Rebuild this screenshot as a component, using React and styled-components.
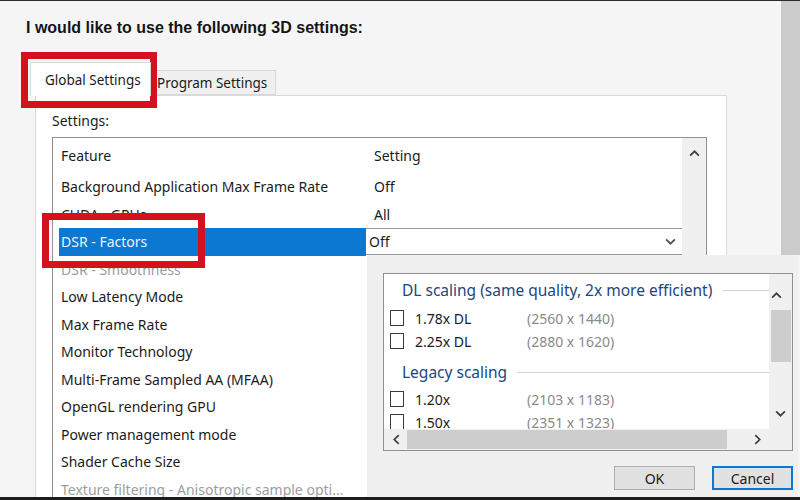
import React from 'react';
import styled, { createGlobalStyle } from 'styled-components';

const GlobalStyle = createGlobalStyle`
  html, body {
    margin: 0;
    padding: 0;
    background: #f4f4f5;
    overflow: hidden;
  }
  * { box-sizing: border-box; }
`;

const UI_FONT = `"Noto Sans", "Open Sans", sans-serif`;

const Window = styled.div`
  position: relative;
  width: 800px;
  height: 500px;
  overflow: hidden;
  background: #f5f5f6;
  border-top: 1px solid #2b2b2b;
  border-bottom: 3px solid #1c1c1c;
  font-family: ${UI_FONT};
  color: #1b1b1b;
  display: flex;
`;

const Main = styled.div`
  flex: 1;
  display: flex;
  flex-direction: column;
`;

const SideStrip = styled.div`
  width: 19px;
  height: 254px;
  background: #cbcbcb;
`;

const Title = styled.h1`
  margin: 17px 0 0 26px;
  font-family: "Liberation Sans", Arial, sans-serif;
  font-weight: bold;
  font-size: 16px;
  line-height: 20px;
  color: #151515;
`;

const TabStrip = styled.div`
  display: flex;
  align-items: flex-end;
  margin: 24px 0 0 30px;
  height: 34px;
`;

const Tab = styled.div`
  height: ${p => (p.$active ? '34px' : '25px')};
  width: ${p => (p.$active ? '121px' : '125px')};
  margin-bottom: ${p => (p.$active ? '-1px' : '0')};
  background: ${p => (p.$active ? '#ffffff' : '#f0f0f0')};
  border: 1px solid #d9d9d9;
  border-bottom: ${p => (p.$active ? 'none' : '1px solid #d9d9d9')};
  border-left: ${p => (p.$active ? '1px solid #d9d9d9' : 'none')};
  font-size: 13.5px;
  display: flex;
  align-items: center;
  padding-left: ${p => (p.$active ? '14px' : '6px')};
  padding-top: ${p => (p.$active ? '1px' : '0')};
  position: relative;
  z-index: ${p => (p.$active ? 1 : 0)};
`;

const Panel = styled.div`
  margin-left: 35px;
  width: 692px;
  flex: 1;
  background: #ffffff;
  border: 1px solid #d9d9d9;
  border-bottom: none;
  padding: 14px 0 0 16px;
  display: flex;
  flex-direction: column;
`;

const Label = styled.div`
  font-size: 14px;
  line-height: 21px;
  height: 27px;
`;

const ListBox = styled.div`
  flex: 1;
  width: 655px;
  border: 1px solid #8e9196;
  border-bottom: none;
  display: flex;
`;

const Table = styled.div`
  flex: 1;
  padding-left: 6px;
`;

const Row = styled.div`
  display: grid;
  grid-template-columns: 307px 1fr;
  height: ${p => (p.$header ? '35px' : '27.5px')};
  font-size: 14px;
`;

const FeatureCell = styled.div`
  display: flex;
  align-items: center;
  padding-left: 2px;
  white-space: nowrap;
  color: ${p => (p.$selected ? '#eaf3ff' : p.$dim ? '#9d9d9d' : '#1b1b1b')};
  background: ${p => (p.$selected ? '#0c78d2' : 'transparent')};
`;

const SettingCell = styled.div`
  display: flex;
  align-items: center;
  padding-left: 8px;
`;

const ComboBox = styled.div`
  display: flex;
  align-items: center;
  justify-content: space-between;
  padding: 0 6px 0 3px;
  border-top: 1px solid #9a9a9a;
  border-bottom: 1px solid #9a9a9a;
  background: #ffffff;
  height: 27px;
`;

const VScroll = styled.div`
  width: 24px;
  background: #f0f0f0;
  display: flex;
  flex-direction: column;
  align-items: center;
  padding-top: 10px;
`;

const Chevron = ({ dir = 'down', size = 10, color = '#505050' }) => {
  const paths = {
    up: 'M1 7 L5 3 L9 7',
    down: 'M1 3 L5 7 L9 3',
    left: 'M7 1 L3 5 L7 9',
    right: 'M3 1 L7 5 L3 9',
  };
  return (
    <svg width={size} height={size} viewBox="0 0 10 10">
      <path d={paths[dir]} fill="none" stroke={color} strokeWidth="1.6" />
    </svg>
  );
};

/* ---- popup ---- */

const Popup = styled.div`
  position: absolute;
  left: 367px;
  top: 254px;
  width: 431px;
  height: 243px;
  background: #f0f0f0;
  padding: 18px 0 0 16px;
  display: flex;
  flex-direction: column;
`;

const FactorBox = styled.div`
  width: 410px;
  height: 178px;
  background: #ffffff;
  border: 1px solid #8e9196;
  display: grid;
  grid-template-columns: 1fr 23px;
  grid-template-rows: 1fr 21px;
`;

const FactorList = styled.div`
  overflow: hidden;
  padding: 0 0 0 6px;
  font-size: 14px;
`;

const GroupHeading = styled.div`
  display: flex;
  align-items: center;
  height: 20px;
  margin: ${p => (p.$first ? '6px 0 6.5px' : '9.5px 0 5.5px')};
  padding-left: 12px;
  color: #21467e;
  font-size: 15.5px;
  white-space: nowrap;

  &::after {
    content: '';
    flex: 1;
    height: 1px;
    background: #d4d4d4;
    margin-left: 10px;
  }
`;

const FactorRow = styled.div`
  display: flex;
  align-items: center;
  height: 23px;
  white-space: nowrap;
`;

const Check = styled.span`
  width: 14px;
  height: 16px;
  border: 1px solid #3a3a3a;
  background: #fff;
  margin-right: 11px;
  flex: none;
`;

const FactorName = styled.span`
  width: 112px;
  color: #1b1b1b;
`;

const FactorRes = styled.span`
  color: #8a8a8a;
`;

const PopScrollV = styled.div`
  background: #f0f0f0;
  display: flex;
  flex-direction: column;
  align-items: center;
  padding-top: 10px;
`;

const ThumbV = styled.div`
  width: 20px;
  height: 52px;
  background: #cdcdcd;
  margin-top: 4px;
`;

const PopScrollH = styled.div`
  background: #f0f0f0;
  display: flex;
  align-items: center;
  padding: 0 6px 0 7px;
  gap: 5px;
`;

const ThumbH = styled.div`
  width: 320px;
  height: 19px;
  background: #cdcdcd;
`;

const Filler = styled.div`
  flex: 1;
`;

const Corner = styled.div`
  background: #f0f0f0;
`;

const SpreadV = styled.div`
  flex: 1;
  display: flex;
  flex-direction: column;
  align-items: center;
  justify-content: space-between;
  padding-bottom: 10px;
`;

const Buttons = styled.div`
  display: flex;
  justify-content: flex-end;
  gap: 17px;
  width: 410px;
  margin-top: 15px;
`;

const Button = styled.div`
  width: 81px;
  height: 24px;
  display: flex;
  align-items: center;
  justify-content: center;
  font-size: 14px;
  background: #e1e1e1;
  border: ${p => (p.$default ? '2px solid #0a78d4' : '1px solid #adadad')};
  color: #1b1b1b;
`;

/* ---- highlight marks ---- */

const Mark = styled.div`
  position: absolute;
  border: 7px solid #d5111d;
  pointer-events: none;
`;

const features = [
  { name: 'Background Application Max Frame Rate', value: 'Off' },
  { name: 'CUDA - GPUs', value: 'All' },
  { name: 'DSR - Factors', value: 'Off', selected: true },
  { name: 'DSR - Smoothness', dim: true },
  { name: 'Low Latency Mode' },
  { name: 'Max Frame Rate' },
  { name: 'Monitor Technology' },
  { name: 'Multi-Frame Sampled AA (MFAA)' },
  { name: 'OpenGL rendering GPU' },
  { name: 'Power management mode' },
  { name: 'Shader Cache Size' },
  { name: 'Texture filtering - Anisotropic sample opti...', dim: true },
];

const groups = [
  {
    title: 'DL scaling (same quality, 2x more efficient)',
    items: [
      ['1.78x DL', '(2560 x 1440)'],
      ['2.25x DL', '(2880 x 1620)'],
    ],
  },
  {
    title: 'Legacy scaling',
    items: [
      ['1.20x', '(2103 x 1183)'],
      ['1.50x', '(2351 x 1323)'],
    ],
  },
];

export default function App() {
  return (
    <Window>
      <GlobalStyle />
      <Main>
        <Title>I would like to use the following 3D settings:</Title>
        <TabStrip>
          <Tab $active>Global Settings</Tab>
          <Tab>Program Settings</Tab>
        </TabStrip>
        <Panel>
          <Label>Settings:</Label>
          <ListBox>
            <Table>
              <Row $header>
                <FeatureCell>Feature</FeatureCell>
                <SettingCell>Setting</SettingCell>
              </Row>
              {features.map(f => (
                <Row key={f.name}>
                  <FeatureCell $selected={f.selected} $dim={f.dim}>{f.name}</FeatureCell>
                  {f.selected ? (
                    <ComboBox>
                      {f.value}
                      <Chevron dir="down" size={11} />
                    </ComboBox>
                  ) : (
                    <SettingCell>{f.value}</SettingCell>
                  )}
                </Row>
              ))}
            </Table>
            <VScroll>
              <Chevron dir="up" size={11} color="#404040" />
            </VScroll>
          </ListBox>
        </Panel>
      </Main>
      <SideStrip />

      <Popup>
        <FactorBox>
          <FactorList>
            {groups.map((g, gi) => (
              <div key={g.title}>
                <GroupHeading $first={gi === 0}>{g.title}</GroupHeading>
                {g.items.map(([name, res]) => (
                  <FactorRow key={name}>
                    <Check />
                    <FactorName>{name}</FactorName>
                    <FactorRes>{res}</FactorRes>
                  </FactorRow>
                ))}
              </div>
            ))}
          </FactorList>
          <PopScrollV>
            <SpreadV>
              <div>
                <Chevron dir="up" size={11} color="#404040" />
                <ThumbV />
              </div>
              <Chevron dir="down" size={11} color="#404040" />
            </SpreadV>
          </PopScrollV>
          <PopScrollH>
            <Chevron dir="left" size={11} color="#404040" />
            <ThumbH />
            <Filler />
            <Chevron dir="right" size={11} color="#404040" />
          </PopScrollH>
          <Corner />
        </FactorBox>
        <Buttons>
          <Button>OK</Button>
          <Button $default>Cancel</Button>
        </Buttons>
      </Popup>

      <Mark style={{ left: 21, top: 51, width: 136, height: 56 }} />
      <Mark style={{ left: 42, top: 212, width: 163, height: 55 }} />
    </Window>
  );
}
